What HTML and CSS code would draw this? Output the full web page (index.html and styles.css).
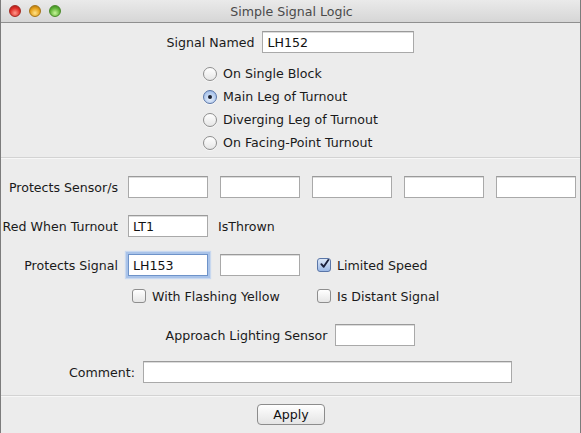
FILE: index.html
```html
<!DOCTYPE html>
<html>
<head>
<meta charset="utf-8">
<link rel="stylesheet" href="styles.css">
</head>
<body>
<div class="window">
  <div class="titlebar">
    <div class="lights">
      <span class="light red"></span>
      <span class="light yellow"></span>
      <span class="light green"></span>
    </div>
    <div class="title">Simple Signal Logic</div>
  </div>
  <div class="content">
    <div class="row center r-name">
      <span class="lbl">Signal Named</span>
      <input class="field w-name" type="text" value="LH152">
    </div>
    <div class="radios">
      <div class="radio-row"><span class="radio"></span><span>On Single Block</span></div>
      <div class="radio-row"><span class="radio on"></span><span>Main Leg of Turnout</span></div>
      <div class="radio-row"><span class="radio"></span><span>Diverging Leg of Turnout</span></div>
      <div class="radio-row"><span class="radio"></span><span>On Facing-Point Turnout</span></div>
    </div>
    <div class="sep sep1"></div>
    <div class="row form r-sensors">
      <span class="flabel">Protects Sensor/s</span>
      <div class="fields">
        <input class="field w80" type="text" value="">
        <input class="field w80" type="text" value="">
        <input class="field w80" type="text" value="">
        <input class="field w80" type="text" value="">
        <input class="field w80" type="text" value="">
      </div>
    </div>
    <div class="row form r-turnout">
      <span class="flabel">Red When Turnout</span>
      <div class="fields">
        <input class="field w80" type="text" value="LT1">
        <span class="after">IsThrown</span>
      </div>
    </div>
    <div class="row form r-signal">
      <span class="flabel">Protects Signal</span>
      <div class="fields">
        <input class="field w80 focus" type="text" value="LH153">
        <input class="field w80" type="text" value="">
        <span class="check-item cb-col"><span class="checkbox on"><svg viewBox="0 0 14 14" width="14" height="14"><path d="M3 7.2 L6 10.5 L11.8 2" fill="none" stroke="#1a1f3a" stroke-width="2.4" stroke-linecap="round" stroke-linejoin="round"/></svg></span><span>Limited Speed</span></span>
      </div>
    </div>
    <div class="row form r-checks">
      <span class="flabel"></span>
      <div class="fields">
        <span class="check-item cb-first"><span class="checkbox"></span><span>With Flashing Yellow</span></span>
        <span class="check-item"><span class="checkbox"></span><span>Is Distant Signal</span></span>
      </div>
    </div>
    <div class="row center r-approach">
      <span class="lbl">Approach Lighting Sensor</span>
      <input class="field w80" type="text" value="">
    </div>
    <div class="row center r-comment">
      <span class="lbl">Comment:</span>
      <input class="field w-comment" type="text" value="">
    </div>
    <div class="sep sep2"></div>
    <div class="row center r-apply">
      <button class="btn" type="button">Apply</button>
    </div>
  </div>
</div>
</body>
</html>
```

FILE: styles.css
```css
html, body {
  margin: 0;
  padding: 0;
  background: #ececec;
}
.window {
  width: 581px;
  height: 433px;
  box-sizing: border-box;
  background: #ececec;
  border-left: 1px solid #7c7c7c;
  border-right: 1px solid #7c7c7c;
  font-family: "DejaVu Sans", sans-serif;
  font-size: 12.6px;
  color: #1a1a1a;
  overflow: hidden;
}
.titlebar {
  position: relative;
  height: 22px;
  border-bottom: 1px solid #8f8f8f;
  background: linear-gradient(#eaeaea, #d6d6d6);
  display: flex;
  align-items: center;
  justify-content: center;
}
.lights {
  position: absolute;
  left: 8px;
  top: 5px;
  display: flex;
  gap: 8px;
}
.light {
  width: 12px;
  height: 12px;
  border-radius: 50%;
  box-sizing: border-box;
}
.light.red {
  background: radial-gradient(circle at 50% 70%, #ff9a8c 0%, #e0302a 55%, #9c1512 100%);
  border: 1px solid #a32a22;
}
.light.yellow {
  background: radial-gradient(circle at 50% 70%, #ffe38a 0%, #e6a21c 55%, #a0650a 100%);
  border: 1px solid #a67618;
}
.light.green {
  background: radial-gradient(circle at 50% 70%, #c8f59a 0%, #62b53a 55%, #2f7a17 100%);
  border: 1px solid #4a8a2a;
}
.title {
  font-size: 12.6px;
  color: #4a4a4a;
  margin-left: 2px;
}
.content {
  display: flex;
  flex-direction: column;
}
.row {
  display: flex;
  align-items: center;
}
.center {
  justify-content: center;
}
.r-name { margin-top: 8px; gap: 8px; margin-left: 0; }
.field {
  box-sizing: border-box;
  height: 22px;
  border: 1px solid #a9a9a9;
  border-top-color: #9a9a9a;
  box-shadow: inset 0 1px 0 #dcdcdc;
  background: #fff;
  font-family: "DejaVu Sans", sans-serif;
  font-size: 12.6px;
  color: #111;
  padding: 1px 0 0 4px;
  margin: 0;
  outline: none;
}
.w-name { width: 152px; }
.w80 { width: 80px; }
.w-comment { width: 369px; }
.field.focus {
  border-color: #6e93c9;
  box-shadow: 0 0 0 2px #a9c3e9, 0 0 1px 3px #c8d8ef;
}
.radios {
  margin-top: 9px;
  align-self: center;
  display: flex;
  flex-direction: column;
  margin-left: 0;
}
.radio-row {
  height: 23px;
  display: flex;
  align-items: center;
  gap: 6px;
}
.radio {
  width: 14px;
  height: 14px;
  box-sizing: border-box;
  border-radius: 50%;
  border: 1px solid #8e8e8e;
  background: linear-gradient(#ffffff, #e6e6e6);
  box-shadow: 0 1px 0 #f6f6f6;
  display: flex;
  align-items: center;
  justify-content: center;
}
.radio.on {
  border-color: #5a76a8;
  background: radial-gradient(circle at 50% 65%, #e9f1fc 0%, #a9c3ea 70%, #7d9ed3 100%);
}
.radio.on::after {
  content: "";
  width: 4px;
  height: 4px;
  border-radius: 50%;
  background: #1c2130;
}
.sep {
  height: 1px;
  background: #d3d3d3;
  border-bottom: 1px solid #f7f7f7;
}
.sep1 { margin-top: 3px; }
.form {
  height: 22px;
}
.flabel {
  width: 117px;
  flex: none;
  text-align: right;
  white-space: nowrap;
}
.fields {
  display: flex;
  align-items: center;
  margin-left: 10px;
  gap: 12px;
}
.r-sensors { margin-top: 17px; }
.r-turnout { margin-top: 17px; }
.after { margin-left: -2px; }
.r-signal { margin-top: 17px; }
.r-checks { margin-top: 9px; }
.check-item {
  display: flex;
  align-items: center;
  gap: 6px;
}
.cb-col { margin-left: 5px; }
.cb-first { margin-left: 4px; width: 173px; }
.checkbox {
  width: 14px;
  height: 14px;
  box-sizing: border-box;
  border: 1px solid #8e8e8e;
  border-radius: 3px;
  background: linear-gradient(#ffffff, #e6e6e6);
  display: flex;
  align-items: center;
  justify-content: center;
  overflow: visible;
  flex: none;
}
.checkbox.on {
  border-color: #5a76a8;
  background: linear-gradient(#dde8f8, #9cb9e6);
}
.checkbox svg {
  display: block;
  margin-top: -2px;
  margin-left: 1px;
}
.r-approach { margin-top: 17px; gap: 8px; }
.r-comment { margin-top: 15px; gap: 8px; }
.sep2 { margin-top: 12px; }
.r-apply { margin-top: 7px; }
.btn {
  width: 68px;
  height: 21px;
  box-sizing: border-box;
  border: 1px solid #8c8c8c;
  border-radius: 4px;
  background: linear-gradient(#ffffff, #f1f1f1 50%, #e4e4e4);
  font-family: "DejaVu Sans", sans-serif;
  font-size: 12.6px;
  color: #111;
  padding: 0;
  margin-left: 1px;
}
```
